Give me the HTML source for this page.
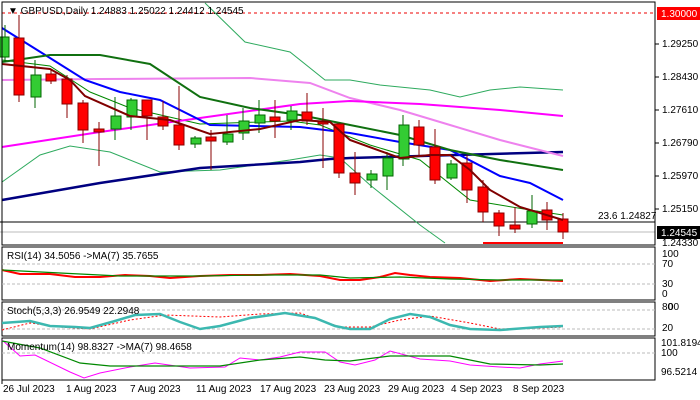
<!DOCTYPE html>
<html><head><meta charset="utf-8"><style>
body{margin:0;background:#fff;}
svg{display:block;font-family:"Liberation Sans",sans-serif;font-size:10px;}
</style></head><body>
<svg width="700" height="400" viewBox="0 0 700 400" xmlns="http://www.w3.org/2000/svg">
<rect width="700" height="400" fill="#fff"/>
<line x1="2" y1="13" x2="655" y2="13" stroke="#e00" stroke-dasharray="3,3"/>
<line x1="0" y1="222" x2="655" y2="222" stroke="#000"/>
<line x1="0" y1="232" x2="655" y2="232" stroke="#bbb"/>
<polyline fill="none" stroke="#2eaa5e" stroke-width="1" points="205,3 245,42 290,52 325,80 350,80 380,85 430,90 460,97 490,90 520,87 563,90"/>
<polyline fill="none" stroke="#2eaa5e" stroke-width="1" points="2,182 40,155 70,146 110,152 160,172 220,170 290,160 320,155 340,158 370,185 420,225 445,243"/>
<polyline fill="none" stroke="#080" stroke-width="1" points="2,60 50,66 90,92 130,108 200,124 290,121 320,125 370,145 420,160 470,200 530,210 563,215"/>
<polyline fill="none" stroke="#000080" stroke-width="2.5" points="2,200 100,183 200,168 300,162 330,159 350,158 563,152"/>
<polyline fill="none" stroke="#ee82ee" stroke-width="2" points="2,80 100,79 250,78 310,83 350,98 400,110 450,125 500,140 563,156"/>
<polyline fill="none" stroke="#f0f" stroke-width="2" points="2,147 100,132 200,118 300,104 350,101 420,104 500,110 563,116"/>
<polyline fill="none" stroke="#00f" stroke-width="2" points="2,28 50,58 85,80 120,92 160,100 210,125 300,127 350,133 400,142 450,150 500,176 530,183 563,200"/>
<polyline fill="none" stroke="#107010" stroke-width="2" points="2,62 50,55 100,55 150,64 200,97 250,108 300,115 350,125 400,135 450,150 500,160 563,170"/>
<g stroke-width="1">
<g fill="#33cc33" stroke="#060">
<line x1="5" y1="25" x2="5" y2="62"/><rect x="0" y="37" width="9" height="20"/>
<line x1="35" y1="60" x2="35" y2="108"/><rect x="31" y="75" width="10" height="22"/>
<line x1="115" y1="97" x2="115" y2="140"/><rect x="111" y="116" width="10" height="13"/>
<line x1="131" y1="98" x2="131" y2="130"/><rect x="127" y="100" width="10" height="17"/>
<line x1="195" y1="136" x2="195" y2="148"/><rect x="191" y="138" width="10" height="6"/>
<line x1="227" y1="115" x2="227" y2="145"/><rect x="223" y="134" width="10" height="8"/>
<line x1="243" y1="108" x2="243" y2="140"/><rect x="239" y="121" width="10" height="12"/>
<line x1="259" y1="100" x2="259" y2="133"/><rect x="255" y="115" width="10" height="8"/>
<line x1="291" y1="106" x2="291" y2="130"/><rect x="287" y="111" width="10" height="9"/>
<line x1="371" y1="170" x2="371" y2="188"/><rect x="367" y="174" width="10" height="6"/>
<line x1="387" y1="152" x2="387" y2="190"/><rect x="383" y="158" width="10" height="18"/>
<line x1="403" y1="115" x2="403" y2="166"/><rect x="399" y="125" width="10" height="34"/>
<line x1="451" y1="160" x2="451" y2="180"/><rect x="447" y="164" width="10" height="14"/>
<line x1="532" y1="195" x2="532" y2="228"/><rect x="527" y="211" width="10" height="13"/>
</g>
<g fill="#f00" stroke="#800">
<line x1="19" y1="15" x2="19" y2="102"/><rect x="14" y="38" width="10" height="57"/>
<line x1="51" y1="70" x2="51" y2="84"/><rect x="46" y="74" width="10" height="7"/>
<line x1="67" y1="75" x2="67" y2="118"/><rect x="62" y="79" width="10" height="25"/>
<line x1="83" y1="100" x2="83" y2="143"/><rect x="78" y="103" width="10" height="27"/>
<line x1="99" y1="122" x2="99" y2="166"/><rect x="94" y="129" width="10" height="3"/>
<line x1="147" y1="100" x2="147" y2="140"/><rect x="142" y="100" width="10" height="16"/>
<line x1="163" y1="101" x2="163" y2="130"/><rect x="158" y="117" width="10" height="9"/>
<line x1="179" y1="86" x2="179" y2="150"/><rect x="174" y="125" width="10" height="20"/>
<line x1="211" y1="130" x2="211" y2="170"/><rect x="206" y="137" width="10" height="4"/>
<line x1="275" y1="100" x2="275" y2="138"/><rect x="270" y="117" width="10" height="4"/>
<line x1="307" y1="93" x2="307" y2="125"/><rect x="302" y="112" width="10" height="9"/>
<line x1="323" y1="108" x2="323" y2="168"/><rect x="318" y="121" width="10" height="3"/>
<line x1="339" y1="123" x2="339" y2="178"/><rect x="334" y="124" width="10" height="49"/>
<line x1="355" y1="152" x2="355" y2="195"/><rect x="350" y="173" width="10" height="10"/>
<line x1="419" y1="120" x2="419" y2="155"/><rect x="414" y="127" width="10" height="18"/>
<line x1="435" y1="129" x2="435" y2="184"/><rect x="430" y="147" width="10" height="33"/>
<line x1="467" y1="155" x2="467" y2="203"/><rect x="462" y="163" width="10" height="27"/>
<line x1="483" y1="180" x2="483" y2="222"/><rect x="478" y="187" width="10" height="25"/>
<line x1="499" y1="210" x2="499" y2="236"/><rect x="494" y="213" width="10" height="13"/>
<line x1="515" y1="207" x2="515" y2="233"/><rect x="510" y="225" width="10" height="4"/>
<line x1="547" y1="202" x2="547" y2="230"/><rect x="542" y="210" width="10" height="10"/>
<line x1="563" y1="213" x2="563" y2="239"/><rect x="558" y="219" width="10" height="13"/>
</g>
</g>
<polyline fill="none" stroke="#800000" stroke-width="2" points="2,64 50,69 70,80 85,96 130,116 170,120 210,134 260,129 300,120 330,122 350,140 400,158 430,155 450,155 470,170 490,190 520,207 563,220"/>
<line x1="483" y1="243" x2="563" y2="243" stroke="#f00" stroke-width="2"/>
<rect x="2" y="2" width="653" height="243" fill="none" stroke="#000"/>
<text x="8" y="14">▼ GBPUSD,Daily  1.24883 1.25022 1.24412 1.24545</text>
<text x="598" y="219">23.6 1.24827</text>
<g fill="#000">
<line x1="655" y1="44" x2="659" y2="44" stroke="#000"/><text x="662" y="47">1.29250</text>
<line x1="655" y1="77" x2="659" y2="77" stroke="#000"/><text x="662" y="80">1.28430</text>
<line x1="655" y1="110" x2="659" y2="110" stroke="#000"/><text x="662" y="113">1.27610</text>
<line x1="655" y1="143" x2="659" y2="143" stroke="#000"/><text x="662" y="146">1.26790</text>
<line x1="655" y1="176" x2="659" y2="176" stroke="#000"/><text x="662" y="179">1.25970</text>
<line x1="655" y1="209" x2="659" y2="209" stroke="#000"/><text x="662" y="212">1.25150</text>
<text x="662" y="246">1.24330</text>
</g>
<rect x="657" y="7" width="43" height="13" fill="#f00"/><text x="661" y="17" fill="#fff">1.30000</text>
<rect x="657" y="226" width="43" height="13" fill="#000"/><text x="661" y="236" fill="#fff">1.24545</text>
<rect x="2" y="247" width="653" height="53" fill="none" stroke="#000"/>
<line x1="2" y1="264" x2="655" y2="264" stroke="#bbb" stroke-dasharray="3,2"/>
<line x1="2" y1="284" x2="655" y2="284" stroke="#bbb" stroke-dasharray="3,2"/>
<polyline fill="none" stroke="#f00" stroke-width="2" points="2,270 20,274 50,274 75,277 100,277 125,275 150,276 170,278 200,276 230,275 260,275 290,274 320,276 340,280 360,280 380,277 395,273 410,275 430,277 460,278 490,281 520,279 563,281"/>
<polyline fill="none" stroke="#080" stroke-width="1.2" points="2,270 60,273 120,276 200,276 260,275 320,275 350,278 400,277 450,279 500,280 563,280"/>
<text x="7" y="259">RSI(14) 34.5056  -&gt;MA(7) 35.7655</text>
<text x="662" y="257">100</text><text x="662" y="267">70</text><text x="662" y="287">30</text><text x="662" y="297">0</text>
<rect x="2" y="302" width="653" height="34" fill="none" stroke="#000"/>
<line x1="2" y1="310" x2="655" y2="310" stroke="#bbb" stroke-dasharray="3,2"/>
<line x1="2" y1="329" x2="655" y2="329" stroke="#bbb" stroke-dasharray="3,2"/>
<polyline fill="none" stroke="#f00" stroke-dasharray="2,2" points="2,330 30,323 60,327 90,329 130,320 165,315 220,317 260,314 300,313 340,327 370,327 400,320 430,316 470,323 500,329 540,328 563,327"/>
<polyline fill="none" stroke="#3cb8b0" stroke-width="2.5" points="2,323 30,321 50,326 75,327 90,328 115,321 135,315 160,314 180,322 200,329 220,326 250,318 285,313 315,318 335,326 350,329 370,329 390,319 410,314 430,317 450,325 470,329 500,330 540,327 563,326"/>
<text x="7" y="314">Stoch(5,3,3) 26.9549 22.2948</text>
<text x="662" y="310">80</text><text x="668" y="310">00</text><text x="662" y="331">20</text>
<rect x="2" y="338" width="653" height="42" fill="none" stroke="#000"/>
<line x1="2" y1="353" x2="655" y2="353" stroke="#bbb" stroke-dasharray="3,2"/>
<polyline fill="none" stroke="#f0f" stroke-width="1" points="2,340 20,356 35,355 70,372 84,378 100,373 130,367 155,363 190,368 225,367 240,358 260,360 280,357 300,352 325,352 340,362 355,365 375,360 390,351 405,355 420,359 450,361 470,365 500,367 520,368 540,364 563,361"/>
<polyline fill="none" stroke="#080" stroke-width="1.2" points="2,341 40,348 80,363 110,366 170,366 220,366 260,360 300,357 325,360 350,361 390,356 450,356 490,364 540,365 563,364"/>
<text x="7" y="350">Momentum(14) 98.8327  -&gt;MA(7) 98.4658</text>
<text x="661" y="346">101.8194</text><text x="661" y="356">100</text><text x="661" y="375">96.5214</text>
<g>
<line x1="2" y1="380" x2="2" y2="384" stroke="#000"/><text x="3" y="392">26 Jul 2023</text>
<text x="66" y="392">1 Aug 2023</text>
<text x="130" y="392">7 Aug 2023</text>
<text x="196" y="392">11 Aug 2023</text>
<text x="260" y="392">17 Aug 2023</text>
<text x="324" y="392">23 Aug 2023</text>
<text x="388" y="392">29 Aug 2023</text>
<text x="451" y="392">4 Sep 2023</text>
<text x="513" y="392">8 Sep 2023</text>
</g>
</svg>
</body></html>
